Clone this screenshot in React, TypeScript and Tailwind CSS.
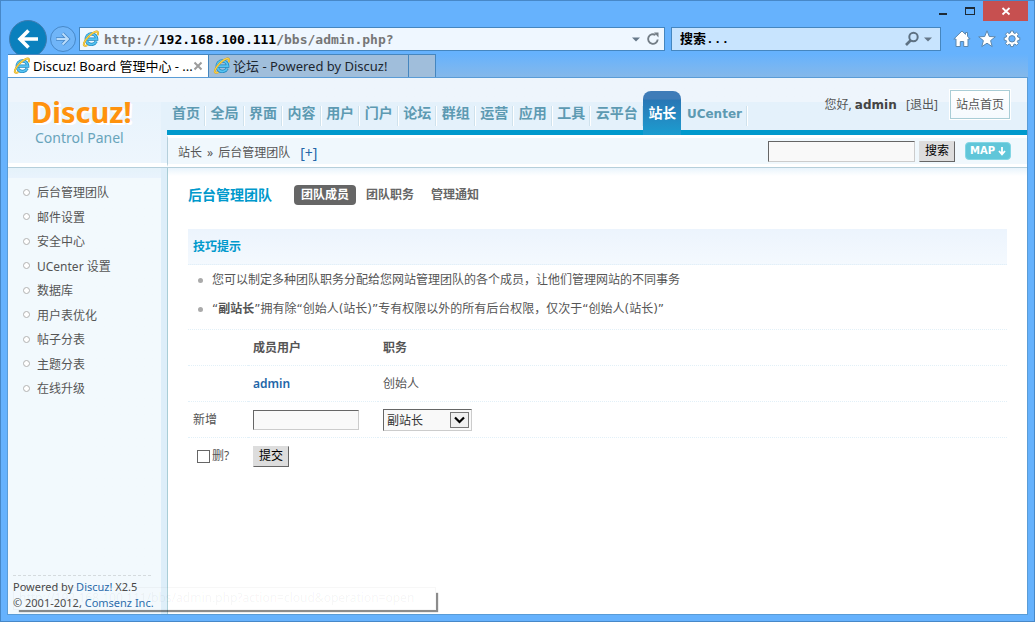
import type { ReactNode } from 'react';

const NAV = ['首页', '全局', '界面', '内容', '用户', '门户', '论坛', '群组', '运营', '应用', '工具', '云平台', '站长', 'UCenter'];
const MENU = ['后台管理团队', '邮件设置', '安全中心', 'UCenter 设置', '数据库', '用户表优化', '帖子分表', '主题分表', '在线升级'];

function BrowserLogo() {
  return (
    <svg viewBox="0 0 18 18" className="size-[18px] shrink-0" aria-hidden="true">
      <path d="M14.2 11.400a5.300 5.300 0 1 1 .5-2.300H5" fill="none" stroke="#1b84bd" strokeWidth="3.200" />
      <path d="M14.2 11.400a5.300 5.300 0 1 1 .5-2.300H5" fill="none" stroke="#55c3f2" strokeWidth="1.900" />
      <path d="M15.600 5.200C16.600 2.800 16 1 13.600 1.700 9.600 2.900 3.800 8.500 2.100 12.800c-1 2.700.300 3.900 3.200 2.400" fill="none" stroke="#c99512" strokeWidth="1.900" />
      <path d="M15.600 5.200C16.600 2.800 16 1 13.600 1.700 9.600 2.900 3.800 8.500 2.100 12.800c-1 2.700.300 3.900 3.200 2.400" fill="none" stroke="#fbd34c" strokeWidth="1.200" />
    </svg>
  );
}

function Caret() {
  return (
    <svg viewBox="0 0 8 5" className="h-[5px] w-2" aria-hidden="true">
      <path d="M0 .5h8L4 4.500z" fill="#66788a" />
    </svg>
  );
}

function WindowControls() {
  return (
    <div className="flex h-5 justify-end">
      <button type="button" aria-label="最小化" className="flex w-7 items-center justify-center">
        <svg viewBox="0 0 12 12" className="size-3"><path d="M2 8h8v2H2z" fill="#1d2a36" /></svg>
      </button>
      <button type="button" aria-label="最大化" className="flex w-[26px] items-center justify-center">
        <svg viewBox="0 0 12 12" className="size-3"><path d="M1 2h10v8H1zm1 2v5h8V4z" fill="#1d2a36" fillRule="evenodd" /></svg>
      </button>
      <button type="button" aria-label="关闭" className="flex w-[45px] items-center justify-center bg-[#c75050]">
        <svg viewBox="0 0 10 10" className="size-[10px]"><path d="M1.500 2l7 6.500M8.500 2l-7 6.500" stroke="#fff" strokeWidth="1.800" /></svg>
      </button>
    </div>
  );
}

function ToolIcon({ label, children }: { label: string; children: ReactNode }) {
  return (
    <button type="button" aria-label={label} className="size-[18px]">
      <svg viewBox="0 0 18 18" className="size-[18px]" fill="#fff" stroke="#5b87ae" strokeWidth="1">{children}</svg>
    </button>
  );
}

function Toolbar() {
  return (
    <div className="flex h-9 items-center pl-[2px] pr-2">
      <button type="button" aria-label="后退" className="flex size-[38px] shrink-0 items-center justify-center rounded-full border border-[#3f7cb0] bg-[#0a80bd]">
        <svg viewBox="0 0 22 22" className="size-[22px]" fill="none" stroke="#fff" strokeWidth="3.600">
          <path d="M2.500 11H21M11.500 2.500L3 11l8.500 8.500" />
        </svg>
      </button>
      <button type="button" aria-label="前进" className="ml-[3px] flex size-[26px] shrink-0 items-center justify-center rounded-full border border-[#4788c8] bg-[#70b5f8]">
        <svg viewBox="0 0 16 16" className="size-4" fill="none">
          <path d="M1 8h12M7.500 2.500L13 8l-5.500 5.500" stroke="#4788c8" strokeWidth="3.600" />
          <path d="M1.500 8H13M7.500 2.500L13 8l-5.500 5.500" stroke="#b9dcfb" strokeWidth="2" />
        </svg>
      </button>
      <div className="ml-[3px] flex h-6 grow items-center border border-[#4586bf] bg-[#eff7ff] pl-[2px] pr-1">
        <BrowserLogo />
        <div role="textbox" aria-label="地址" className="ml-1 grow whitespace-nowrap pt-px font-['DejaVu_Sans_Mono',monospace] text-[13px] font-bold leading-5 text-[#767676]">
          http://<span className="text-black">192.168.100.111</span>/bbs/admin.php?
        </div>
        <Caret />
        <button type="button" aria-label="刷新" className="ml-[6px] size-[14px]">
          <svg viewBox="0 0 14 14" className="size-[14px]" fill="none" stroke="#737d86" strokeWidth="1.900">
            <path d="M11.700 7.500A4.800 4.800 0 1 1 9.500 3" />
            <path d="M8 .4h4.500v5z" fill="#737d86" stroke="none" />
          </svg>
        </button>
      </div>
      <div className="ml-[6px] flex h-6 w-[270px] items-center border border-[#4586bf] bg-[#c8e4fe] pl-2 pr-2">
        <input
          type="text"
          aria-label="搜索"
          placeholder="搜索..."
          className="w-0 grow bg-transparent pt-px font-['Liberation_Mono','Noto_Sans_CJK_SC',monospace] text-[13px] font-bold text-black outline-none placeholder:text-black"
        />
        <button type="button" aria-label="搜索网页" className="size-4">
          <svg viewBox="0 0 16 16" className="size-4" fill="none" stroke="#5d7183" strokeWidth="2">
            <circle cx="9.500" cy="6" r="4.200" />
            <path d="M6.500 9.500l-4.500 4.500" strokeWidth="2.600" />
          </svg>
        </button>
        <span className="ml-1"><Caret /></span>
      </div>
      <div className="ml-3 flex shrink-0 gap-[7px] -mr-px">
        <ToolIcon label="主页">
          <path d="M9 1L.8 9H3v7.500h4.300v-5h3.400v5H15V9h2.200L14.500 6.300V2.500h-2v1.800z" />
        </ToolIcon>
        <ToolIcon label="收藏夹">
          <path d="M9 .8l2.300 5.700 6 .3-4.700 3.800 1.600 6L9 13.200l-5.200 3.400 1.600-6L.7 6.800l6-.3z" />
        </ToolIcon>
        <ToolIcon label="工具">
          <path fillRule="evenodd" d="M7.700 1h2.600l.4 2 1.200.5 1.700-1.200 1.900 1.900-1.200 1.700.5 1.200 2 .4v2.600l-2 .4-.5 1.200 1.200 1.700-1.900 1.900-1.700-1.200-1.200.5-.4 2H7.700l-.4-2-1.200-.5-1.700 1.200-1.900-1.900 1.200-1.700-.5-1.200-2-.4V7.500l2-.4.500-1.200-1.200-1.700 1.900-1.900 1.700 1.200L7.300 3zM9 5.600a3.200 3.200 0 1 0 0 6.400 3.200 3.200 0 0 0 0-6.400z" />
        </ToolIcon>
      </div>
    </div>
  );
}

function BrowserTabs() {
  return (
    <div className="relative -mt-[3px] ml-px flex h-[23px] bg-linear-to-b from-[#66b2fd] to-[#84b8ea] font-['Noto_Sans','Noto_Sans_CJK_SC',sans-serif] text-[13px] leading-[22px]">
      <div className="flex w-[201px] items-center border-r border-t border-[#4586bf] bg-white pl-[5px] pr-[5px]">
        <BrowserLogo />
        <span className="ml-[2px] grow whitespace-nowrap text-black">Discuz! Board 管理中心 - ...</span>
        <button type="button" aria-label="关闭标签页" className="size-[10px] shrink-0">
          <svg viewBox="0 0 10 10" className="size-[10px]"><path d="M1.500 1.500l7 7M8.500 1.500l-7 7" stroke="#9c9c9c" strokeWidth="2" /></svg>
        </button>
      </div>
      <div className="flex w-[200px] items-center border-r border-t border-[#4586bf] bg-[#a0bedb] pl-1">
        <BrowserLogo />
        <span className="ml-[2px] whitespace-nowrap text-[#1c2630]">论坛 - Powered by Discuz!</span>
      </div>
      <button type="button" aria-label="新建标签页" className="w-[27px] border-r border-t border-[#4586bf] bg-[#a0bedb]" />
    </div>
  );
}

function Header() {
  return (
    <header className="flex h-[90px] border-b border-[#b5cfdb] bg-linear-to-b from-[#eef5fc] from-[24px] to-[#e4f1fb] to-[24px]">
      <div className="flex w-[159px] shrink-0 flex-col">
        <div className="h-6" />
        <div className="mr-[6px] h-[61px] bg-linear-to-b from-[#e8f3fc] to-[#eef6fd] font-['Noto_Sans',sans-serif]">
          <div className="-mt-[10px] pl-[23px] text-[29px] font-bold leading-10 text-[#ff920d] [text-shadow:1px_1px_0_#fff,2px_2px_0_#fff]">Discuz!</div>
          <div className="-mt-1 pl-[27px] text-[14px] leading-5 text-[#68a4bb]">Control Panel</div>
        </div>
        <div className="grow bg-white" />
      </div>
      <div className="flex grow flex-col">
        <div className="flex h-[52px] items-end pr-4">
          <nav aria-label="主菜单">
            <ul className="flex w-[580px] justify-between text-[14px] font-bold leading-8 text-[#5d9ab2]">
              {NAV.map((item) => (
                <li
                  key={item}
                  className={
                    item === '站长'
                      ? 'relative z-10 -mb-[5px] -mt-[6px] rounded-t-lg bg-linear-to-b from-[#3f7cb8] from-[8px] via-[#2877b5] via-[9px] to-[#1a9dd0] px-[5px] pb-[5px] pt-[6px] text-white'
                      : "relative px-[5px] after:absolute after:-right-px after:bottom-1 after:h-5 after:w-0.5 after:border-l after:border-[#cfe2ed] after:bg-white after:content-['']"
                  }
                >
                  <a href="#" className={item === 'UCenter' ? "font-['DejaVu_Sans',sans-serif] text-[12px]" : ''}>{item}</a>
                </li>
              ))}
            </ul>
          </nav>
          <div className="mb-[10px] ml-auto flex items-center gap-[11px] whitespace-nowrap">
            <p>您好, <strong className="font-['DejaVu_Sans',sans-serif] text-[#444]">admin</strong>&nbsp;&nbsp; [<a href="#">退出</a>]</p>
            <a href="#" className="border border-white bg-[#a9cdd6] p-px">
              <span className="block bg-linear-to-b from-white to-[#f5fafe] px-[5px] leading-[27px] text-[#555]">站点首页</span>
            </a>
          </div>
        </div>
        <div className="h-[5px] bg-[#0099cc]" />
        <div className="flex grow items-center border-y-[3px] border-l border-y-white border-l-[#b5cfdb] bg-[#f0f8fd] pl-[10px] pr-4">
          <p className="flex items-center gap-[5px] pt-1">
            <span>站长</span>
            <span>»</span>
            <span>后台管理团队</span>
            <a href="#" className="ml-[5px] text-[14px] text-[#2366a8]">[+]</a>
          </p>
          <form className="ml-auto flex items-center">
            <input type="text" aria-label="搜索内容" className="h-[21px] w-[147px] border border-b-[#ccc] border-l-[#666] border-r-[#ccc] border-t-[#666] bg-[#f9f9f9] px-1" />
            <button type="button" className="ml-1 h-[21px] w-9 border border-b-[#666] border-l-[#ddd] border-r-[#666] border-t-[#ddd] bg-[#ddd] leading-[18px] text-black">搜索</button>
            <button type="button" className="ml-[10px] flex h-[18px] w-[46px] items-center justify-center gap-[3px] rounded border border-[#82d6e4] bg-[#60c6d9] font-['DejaVu_Sans',sans-serif] text-[10px] font-bold text-white">
              MAP
              <svg viewBox="0 0 8 9" className="h-[9px] w-2" fill="none" stroke="#fff" strokeWidth="1.800" aria-hidden="true"><path d="M4 0v7M1 4l3 3.300L7 4" /></svg>
            </button>
          </form>
        </div>
      </div>
    </header>
  );
}

function Sidebar() {
  return (
    <aside className="flex w-[160px] shrink-0 flex-col border-r border-[#a9cdd6] bg-linear-to-r from-[#f2f9fd] from-[153px] to-[#ddeef9] to-[153px]">
      <div className="mr-[6px] h-[10px] bg-linear-to-b from-[#e5f2fa] to-[#e9f3fd]" />
      <ul className="mt-[3px] flex h-[220px] flex-col justify-between pl-[15px] leading-6">
        {MENU.map((item) => (
          <li key={item} className="flex items-center">
            <span className="mb-[2px] mr-[7px] size-[7px] rounded-full border border-[#b2b2b2] bg-white" />
            <a href="#">{item}</a>
          </li>
        ))}
      </ul>
      <footer className="mb-[3px] ml-[5px] mr-4 mt-auto whitespace-nowrap border-t border-dashed border-[#d5dbde] pt-[3px] text-[11px] leading-4 text-[#444]">
        <p>Powered by <a href="#" className="text-[#2366a8]">Discuz!</a> X2.5</p>
        <p>© 2001-2012, <a href="#" className="text-[#2366a8]">Comsenz Inc.</a></p>
      </footer>
    </aside>
  );
}

function MemberTable() {
  return (
    <table className="w-full table-fixed border-separate border-spacing-0 text-left [&_td]:h-9 [&_td]:border-dotted [&_td]:border-[#e2f0f8] [&_td]:p-0 [&_td]:pl-[5px] [&_th]:h-9 [&_th]:border-dotted [&_th]:border-[#e2f0f8] [&_th]:p-0 [&_th]:pl-[5px] [&_tr:not(:last-child)>*]:border-b">
      <colgroup>
        <col className="w-[60px]" />
        <col className="w-[130px]" />
        <col />
      </colgroup>
      <tbody>
        <tr>
          <th aria-label="选择" />
          <th>成员用户</th>
          <th>职务</th>
        </tr>
        <tr>
          <td />
          <td><a href="#" className="font-semibold text-[#2366a8]">admin</a></td>
          <td>创始人</td>
        </tr>
        <tr>
          <td><label htmlFor="newuser">新增</label></td>
          <td>
            <input id="newuser" type="text" className="block h-5 w-[106px] border border-b-[#ccc] border-l-[#666] border-r-[#ccc] border-t-[#666] bg-[#f9f9f9] px-1" />
          </td>
          <td>
            <div className="relative w-[89px]">
              <select aria-label="职务" className="block h-[22px] w-full appearance-none border border-b-[#ccc] border-l-[#666] border-r-[#ccc] border-t-[#666] bg-[#f9f9f9] pl-[3px] pt-[2px] leading-[18px] text-[#333]">
                <option>副站长</option>
              </select>
              <span className="pointer-events-none absolute right-[3px] top-[3px] flex h-4 w-[19px] items-center justify-center border border-[#777] bg-[#f0f0f0]">
                <svg viewBox="0 0 11 8" className="h-2 w-[11px]" fill="none" stroke="#000" strokeWidth="2.200" aria-hidden="true"><path d="M1 1.500l4.500 4.500L10 1.500" /></svg>
              </span>
            </div>
          </td>
        </tr>
        <tr>
          <td>
            <label className="flex items-center gap-[2px] pl-1">
              <input type="checkbox" className="size-[13px] appearance-none border border-[#666] bg-white" />
              删?
            </label>
          </td>
          <td>
            <button type="button" className="block h-[21px] w-9 border border-b-[#666] border-l-[#ddd] border-r-[#666] border-t-[#ddd] bg-[#ddd] leading-[18px] text-black">提交</button>
          </td>
          <td />
        </tr>
      </tbody>
    </table>
  );
}

function Content() {
  return (
    <main className="grow bg-white">
      <div className="h-2 bg-linear-to-b from-[#e9f4fc] to-white" />
      <div className="px-5">
        <div className="flex h-[53px] items-start pt-[9px]">
          <h1 className="text-[14px] font-bold leading-5 text-[#0099cc]">后台管理团队</h1>
          <ul className="ml-[22px] flex gap-[3px] font-bold leading-5 text-[#666]">
            <li className="rounded bg-[#666] px-[7px] text-white"><a href="#">团队成员</a></li>
            <li className="px-[7px]"><a href="#">团队职务</a></li>
            <li className="px-[7px]"><a href="#">管理通知</a></li>
          </ul>
        </div>
        <h2 className="border-b border-dotted border-[#e2f0f8] bg-linear-to-b from-[#ecf4fd] to-[#f4f9fe] pl-[5px] text-[12px] font-bold leading-[35px] text-[#0099cc]">技巧提示</h2>
        <ul className="border-b border-dotted border-[#e2f0f8] pb-[5px] pl-[10px] pt-px font-['DejaVu_Sans','Noto_Sans_CJK_SC',sans-serif] leading-[29px]">
          <li className="flex items-center gap-[9px]">
            <span className="size-[5px] shrink-0 rounded-full bg-[#aaa]" />
            <span>您可以制定多种团队职务分配给您网站管理团队的各个成员，让他们管理网站的不同事务</span>
          </li>
          <li className="flex items-center gap-[9px]">
            <span className="size-[5px] shrink-0 rounded-full bg-[#aaa]" />
            <span>“<strong>副站长</strong>”拥有除“创始人(站长)”专有权限以外的所有后台权限，仅次于“创始人(站长)”</span>
          </li>
        </ul>
        <MemberTable />
      </div>
    </main>
  );
}

export default function App() {
  return (
    <div className="flex min-h-screen flex-col border border-[#4788c8] bg-[#66b2fd] px-[6px] pb-[6px]">
      <WindowControls />
      <Toolbar />
      <BrowserTabs />
      <div className="relative flex grow flex-col border border-[#5a9cd6] font-['Noto_Sans','Noto_Sans_CJK_SC',sans-serif] text-[12px] leading-[18px] text-[#555]">
        <Header />
        <div className="flex grow">
          <Sidebar />
          <Content />
        </div>
        <div role="status" className="absolute bottom-1 left-[5px] h-[23px] whitespace-nowrap border border-black/3 bg-white/5 pl-[5px] pr-[21px] text-[12px] leading-5 text-black/5 shadow-[4px_4px_1px_-2px_rgba(0,0,0,0.45)]">
          http://192.168.100.111/bbs/admin.php?action=cloud&amp;operation=open
        </div>
      </div>
    </div>
  );
}
